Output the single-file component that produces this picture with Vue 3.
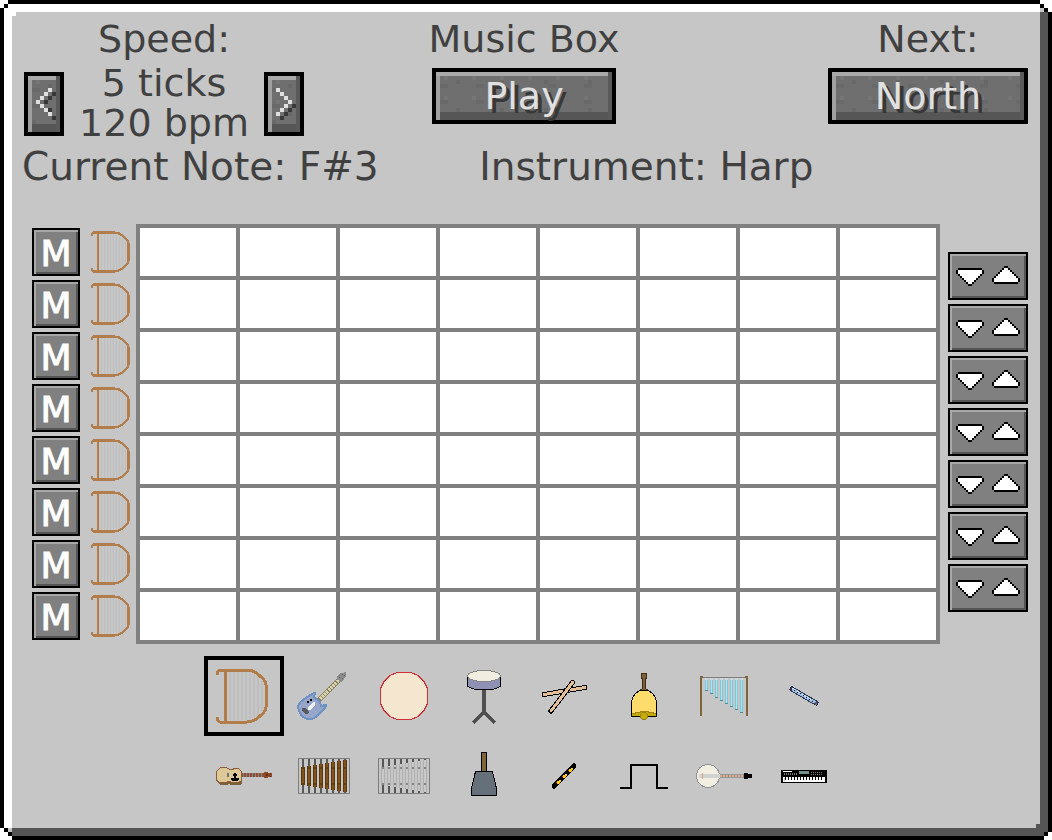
<template>
  <div class="frame">
    <svg
      v-for="corner in corners"
      :key="corner.name"
      class="corner"
      :class="corner.name"
      viewBox="0 0 4 4"
      aria-hidden="true"
    >
      <template v-for="(row, y) in corner.rows" :key="y">
        <rect
          v-for="(cell, x) in row"
          :key="x"
          :x="x"
          :y="y"
          width="1"
          height="1"
          :fill="palette[cell]"
        />
      </template>
    </svg>

    <header class="header">
      <section class="speed">
        <h2>Speed:</h2>
        <div class="speed-row">
          <button class="stone small" type="button" aria-label="Slower" @click="changeTicks(-1)">
            <svg viewBox="0 0 6 8" aria-hidden="true">
              <path
                fill="#383838"
                d="M4 1h1v1h-1zM3 2h1v1h-1zM2 3h1v1h-1zM3 5h1v1h-1zM4 7h1v1h-1z"
              />
              <path
                fill="#e0e0e0"
                d="M3 0h1v1h-1zM2 1h1v1h-1zM1 2h1v1h-1zM0 3h1v1h-1zM1 4h1v1h-1zM2 5h1v1h-1zM3 6h1v1h-1z"
              />
            </svg>
          </button>
          <p>{{ ticks }} ticks<br />{{ bpm }} bpm</p>
          <button class="stone small" type="button" aria-label="Faster" @click="changeTicks(1)">
            <svg viewBox="0 0 6 8" aria-hidden="true">
              <path fill="#383838" d="M4 4h1v1h-1zM3 5h1v1h-1zM2 6h1v1h-1zM1 7h1v1h-1z" />
              <path
                fill="#e0e0e0"
                d="M0 0h1v1h-1zM1 1h1v1h-1zM2 2h1v1h-1zM3 3h1v1h-1zM2 4h1v1h-1zM1 5h1v1h-1zM0 6h1v1h-1z"
              />
            </svg>
          </button>
        </div>
      </section>

      <section class="player">
        <h1>Music Box</h1>
        <button class="stone wide" type="button" @click="playing = !playing">
          {{ playing ? 'Stop' : 'Play' }}
        </button>
      </section>

      <section class="next">
        <h2>Next:</h2>
        <button class="stone wider" type="button" @click="turn">{{ directions[direction] }}</button>
      </section>
    </header>

    <div class="info">
      <p>Current Note: {{ note }}</p>
      <p>Instrument: {{ instruments[selected].label }}</p>
    </div>

    <main class="sequencer">
      <div class="mutes">
        <button
          v-for="(track, i) in tracks"
          :key="i"
          class="panel mute"
          type="button"
          :aria-pressed="track.muted"
          @click="track.muted = !track.muted"
        >
          M
        </button>
      </div>
      <div class="voices">
        <svg v-for="(track, i) in tracks" :key="i" viewBox="0 0 64 64" aria-hidden="true">
          <use :href="'#' + track.instrument" />
        </svg>
      </div>
      <div class="cells">
        <template v-for="(track, i) in tracks" :key="i">
          <button
            v-for="step in 8"
            :key="step"
            class="cell"
            type="button"
            :aria-label="'Track ' + (i + 1) + ', step ' + step"
          ></button>
        </template>
      </div>
      <div class="movers">
        <div v-for="i in 7" :key="i" class="panel mover">
          <button type="button" aria-label="Move track down" @click="swap(i - 1)">
            <svg viewBox="0 0 14 9" aria-hidden="true">
              <path
                d="M1 0h12v1h1v2h-1v1h-1v1h-1v1h-1v1h-1v1h-1v1h-2v-1h-1v-1h-1v-1h-1v-1h-1v-1h-1v-1h-1v-2h1z"
              />
              <path
                fill="#fff"
                d="M1 1h12v2h-1v1h-1v1h-1v1h-1v1h-1v1h-2v-1h-1v-1h-1v-1h-1v-1h-1v-1h-1z"
              />
            </svg>
          </button>
          <button type="button" aria-label="Move track up" @click="swap(i - 1)">
            <svg class="up" viewBox="0 0 14 9" aria-hidden="true">
              <path
                d="M1 9h12v-1h1v-2h-1v-1h-1v-1h-1v-1h-1v-1h-1v-1h-1v-1h-2v1h-1v1h-1v1h-1v1h-1v1h-1v1h-1v2h1z"
              />
              <path
                fill="#fff"
                d="M1 8h12v-2h-1v-1h-1v-1h-1v-1h-1v-1h-1v-1h-2v1h-1v1h-1v1h-1v1h-1v1h-1z"
              />
            </svg>
          </button>
        </div>
      </div>
    </main>

    <nav class="picker" aria-label="Instruments">
      <button
        v-for="(instrument, i) in instruments"
        :key="instrument.id"
        class="slot"
        :class="{ selected: i === selected }"
        type="button"
        :aria-label="instrument.label"
        @click="selected = i"
      >
        <svg viewBox="0 0 64 64" aria-hidden="true">
          <use :href="'#' + instrument.id" />
        </svg>
      </button>
    </nav>

    <svg class="sprites" aria-hidden="true">
      <symbol id="harp" viewBox="0 0 64 64">
        <path
          d="M18 8v48M22 8v48M26 8v48M30 8v48M34 8v48M38 8v48M42 10v44M46 12v40M50 16v32"
          stroke="#bfbfbf"
          stroke-width="2"
        />
        <path d="M12 7h3v50h-3z" fill="#b27d4b" />
        <path
          d="M5 11V8l3-2h27c6 0 10 3 13 6 3 2 6 6 6 9v22c0 3-3 7-6 9-3 3-7 6-13 6H8l-3-2v-3"
          fill="none"
          stroke="#b27d4b"
          stroke-width="3"
        />
      </symbol>

      <symbol id="electric" viewBox="0 0 64 64">
        <path d="M26 37L49 14" stroke="#858066" stroke-width="5" />
        <path d="M26 37L49 14" stroke="#dcd5ab" stroke-width="3" stroke-dasharray="2 1" />
        <path d="M45 14l1-3 3-2 5-1v4l-2 3-3 3h-2v-2h-2z" fill="#8b8b8b" />
        <path d="M47 13h1v1h-1zM50 10h1v1h-1zM50 14h1v1h-1zM52 11h1v1h-1z" fill="#5f5f5f" />
        <path
          d="M6 44q0-5 5-8l4-3 7-4h1l-1 4 6 5 1 4 5-1-1 3-9 9q-3 2-7 2-8 0-11-11z"
          fill="#95a6ca"
          stroke="#6e92c0"
          stroke-width="2"
        />
        <path d="M15 37h2v2h-2zM18 35h2v2h-2z" />
        <path d="M16 43l5-5h2v3l-5 5h-2z" fill="#eef0f4" />
        <path d="M10 44h4l3 4-1 2h-3l-3-3z" fill="#5a5a5a" />
      </symbol>

      <symbol id="drum" viewBox="0 0 64 64">
        <path
          d="M25 8.500h14l7 3 6 6 3.500 7v15l-3.500 7-6 6-7 3h-14l-7-3-6-6-3.500-7v-15l3.500-7 6-6z"
          fill="#f5e7cf"
          stroke="#d02f35"
        />
      </symbol>

      <symbol id="snare" viewBox="0 0 64 64">
        <path d="M30 26h4v23h-4z" fill="#505050" />
        <path d="M32 48L21 59M32 48l11 11" stroke="#505050" stroke-width="3" />
        <path d="M15.500 12v10q4 4 16.500 4t16.500-4V12z" fill="#8f91b4" stroke="#000" />
        <ellipse cx="32" cy="12" rx="16.500" ry="5.500" fill="#f1ede1" stroke="#858585" />
      </symbol>

      <symbol id="sticks" viewBox="0 0 64 64">
        <g stroke-linecap="round">
          <path d="M12 30.500L53 23.500" stroke="#000" stroke-width="5" />
          <path d="M12 30.500L53 23.500" stroke="#e4bf95" stroke-width="3" />
          <path d="M19 47L40.500 18.500" stroke="#000" stroke-width="5" />
          <path d="M19 47L40.500 18.500" stroke="#e4bf95" stroke-width="3" />
        </g>
      </symbol>

      <symbol id="bell" viewBox="0 0 64 64">
        <path d="M29.500 9.500h5v5h-1v10l3 2h-9l3-2v-10h-1z" fill="#7d6035" stroke="#3f2f18" />
        <path
          d="M27.500 26.500h9l4 3 3 4 1 5v13.500h-25V38.500l1-5 3-4z"
          fill="#fddc6b"
          stroke="#000"
        />
        <path d="M20 49h3v-1h5v-1h8v1h5v1h3v3H20z" fill="#c5aa08" />
        <path d="M20 49h3v-1h5v-1h8v1h5v1h3" fill="none" stroke="#a08416" />
        <circle cx="32" cy="52" r="3.500" fill="#c5aa08" stroke="#9a7f12" />
      </symbol>

      <symbol id="chimes" viewBox="0 0 64 64">
        <path d="M9 13h46v1H9z" fill="#7d7d7d" />
        <path d="M8 12h3v2h-1v38H8zM53 12h3v40h-2V14h-1z" fill="#80653a" />
        <g v-for="(h, i) in chimeLengths" :key="i">
          <rect :x="13 + i * 5" y="14" width="3" height="2" fill="#d4d8d9" />
          <rect :x="13 + i * 5" y="16" width="3" :height="h" fill="#7bc8db" />
          <rect :x="14 + i * 5" y="14" width="1" :height="h + 1" fill="#b5e1ea" />
          <rect :x="13 + i * 5" :y="15 + h" width="3" height="1" fill="#4d8d9b" />
        </g>
      </symbol>

      <symbol id="flute" viewBox="0 0 64 64">
        <path d="M20 25L44 39" stroke="#303551" stroke-width="5" stroke-linecap="round" />
        <path d="M20 25L43 38.500" stroke="#9dbfe6" stroke-width="3" />
        <path d="M20 24L40 36" stroke="#d5e8fa" stroke-dasharray="4 2" />
        <path
          d="M22 26h1v1h-1zM25 28h1v1h-1zM28 29h1v1h-1zM31 31h1v1h-1zM34 33h1v1h-1zM37 35h1v1h-1zM40 37h1v1h-1z"
          fill="#17182a"
        />
        <path d="M43 38h2v3h-2z" fill="#5b6079" />
      </symbol>

      <symbol id="guitar" viewBox="0 0 64 64">
        <path d="M4 30h2v7h10v1h3v-1h11v2l-2 2H19l-2-1-2 1H8l-3-3-1-3z" fill="#7b6238" />
        <path
          d="M8.500 23.500h6l3 2h3l2-1h4l3 3v9l-3 2h-6l-3-1-4 1h-6l-3-3v-8z"
          fill="#ddc898"
          stroke="#8d5a38"
        />
        <path d="M15 29h2v4h-2z" fill="#747474" />
        <path d="M22 29h2v1h1v2h-1v2h3v2h-1v1h-6v-1h-1v-2h3v-2h-1v-2h1z" />
        <path d="M30 29h22v4H30z" fill="#8d4f33" />
        <path d="M31 31h21" stroke="#888" stroke-width="4" stroke-dasharray="1 2" />
        <path d="M52 28h4v1h4v4h-4v1h-4z" fill="#8d4a29" />
        <path d="M54 30h2v2h-2zM58 29h1v1h-1zM58 32h1v1h-1z" fill="#5c2e1a" />
      </symbol>

      <symbol id="xylophone" viewBox="0 0 64 64">
        <rect x="6.500" y="14.500" width="51" height="35" fill="none" stroke="#7d7d7d" />
        <g v-for="i in 8" :key="i">
          <rect :x="4 + i * 6" y="15" width="2" height="34" fill="#585858" />
          <rect :x="3 + i * 6" :y="24 - i" width="4" :height="16 + i * 2" fill="#5b380b" />
          <rect :x="4 + i * 6" :y="24 - i" width="2" :height="16 + i * 2" fill="#80511b" />
          <rect :x="4 + i * 6" y="23" width="2" height="2" fill="#65400f" />
          <rect :x="4 + i * 6" y="39" width="2" height="2" fill="#65400f" />
        </g>
      </symbol>

      <symbol id="vibraphone" viewBox="0 0 64 64">
        <rect x="6.500" y="14.500" width="51" height="35" fill="none" stroke="#7d7d7d" />
        <g v-for="i in 8" :key="i">
          <rect :x="4 + i * 6" y="15" width="2" height="34" fill="#555" />
          <rect :x="3 + i * 6" :y="24 - i" width="4" :height="16 + i * 2" fill="#b0b0b0" />
          <rect :x="4 + i * 6" :y="24 - i" width="2" :height="16 + i * 2" fill="#c8c8c8" />
          <rect :x="4 + i * 6" y="23" width="2" height="2" fill="#858585" />
          <rect :x="4 + i * 6" y="39" width="2" height="2" fill="#858585" />
        </g>
      </symbol>

      <symbol id="cowbell" viewBox="0 0 64 64">
        <path d="M29.500 27V9l1-.500h3l1 .500v18z" fill="#7f6438" stroke="#000" />
        <path d="M23.500 27.500h17l4 17v7h-25v-7z" fill="#66707b" stroke="#000" />
      </symbol>

      <symbol id="didgeridoo" viewBox="0 0 64 64">
        <path d="M22 42L42 22" stroke="#000" stroke-width="5" stroke-linecap="round" />
        <path
          d="M24 38h1v1h-1zM27 39h1v1h-1zM30 32h1v1h-1zM33 33h1v1h-1zM36 26h1v1h-1zM39 27h1v1h-1z"
          fill="#e33a2c"
        />
        <path
          d="M24 39h1v-2h2v-1h2v2h-1v1h-1v1h-2zM30 33h1v-2h2v-1h2v2h-1v1h-1v1h-2zM36 27h1v-2h2v-1h2v2h-1v1h-1v1h-2z"
          fill="#ffcf10"
        />
      </symbol>

      <symbol id="bit" viewBox="0 0 64 64">
        <path d="M8 44h11V21h26v23h11" fill="none" stroke="#000" stroke-width="2" />
      </symbol>

      <symbol id="banjo" viewBox="0 0 64 64">
        <circle cx="16" cy="32" r="11.500" fill="#f1efe1" stroke="#919191" />
        <path d="M7 30h21v4H7z" fill="#d2d2d2" />
        <path d="M10 29h1v6h-1z" fill="#d8a07c" />
        <path d="M28 30h24v4H28z" fill="#969696" />
        <path d="M28 32h24" stroke="#dda98a" stroke-width="2" stroke-dasharray="2 1" />
        <path d="M52 29h4v1h4v4h-4v1h-4z" />
      </symbol>

      <symbol id="keyboard" viewBox="0 0 64 64">
        <path d="M9 26h46v13H9z" />
        <path d="M11 27h9v1h-9zM11 33h42v5H11z" fill="#fff" />
        <path d="M27 27h10v3H27z" fill="#71908c" />
        <path d="M12 30h14" stroke="#777" stroke-width="2" stroke-dasharray="1 1" />
        <path d="M39 28.500h12M39 30.500h12" stroke="#777" stroke-dasharray="1 1" />
        <path d="M13 34.500h39" stroke="#000" stroke-width="3" stroke-dasharray="1 2" />
        <path d="M12 34h1v3h-1z" fill="#bcc9d4" />
      </symbol>
    </svg>
  </div>
</template>

<script setup>
import { computed, ref } from 'vue'

const palette = { W: '#ffffff', K: '#000000', G: '#c6c6c6', D: '#555555' }

const corners = [
  { name: 'top-left', rows: ['WWKK', 'WKWW', 'KWWW', 'KWWW'] },
  { name: 'top-right', rows: ['KWWW', 'WKWW', 'WGKW', 'GDDK'] },
  { name: 'bottom-left', rows: ['KWWG', 'WKGD', 'WWKD', 'WWWK'] },
  { name: 'bottom-right', rows: ['DDDK', 'DDDK', 'DDKW', 'KKWW'] }
].map((corner) => ({ ...corner, rows: corner.rows.map((row) => row.split('')) }))

const instruments = [
  { id: 'harp', label: 'Harp' },
  { id: 'electric', label: 'Bass' },
  { id: 'drum', label: 'Bass Drum' },
  { id: 'snare', label: 'Snare' },
  { id: 'sticks', label: 'Sticks' },
  { id: 'bell', label: 'Bell' },
  { id: 'chimes', label: 'Chimes' },
  { id: 'flute', label: 'Flute' },
  { id: 'guitar', label: 'Guitar' },
  { id: 'xylophone', label: 'Xylophone' },
  { id: 'vibraphone', label: 'Iron Xylophone' },
  { id: 'cowbell', label: 'Cow Bell' },
  { id: 'didgeridoo', label: 'Didgeridoo' },
  { id: 'bit', label: 'Bit' },
  { id: 'banjo', label: 'Banjo' },
  { id: 'keyboard', label: 'Pling' }
]

const chimeLengths = [11, 14, 18, 21, 24, 27, 30, 33]
const directions = ['North', 'East', 'South', 'West']

const ticks = ref(5)
const bpm = computed(() => Math.round(600 / ticks.value))
const playing = ref(false)
const direction = ref(0)
const note = ref('F#3')
const selected = ref(0)
const tracks = ref(Array.from({ length: 8 }, () => ({ instrument: 'harp', muted: false })))

function changeTicks(delta) {
  ticks.value = Math.min(20, Math.max(1, ticks.value + delta))
}

function turn() {
  direction.value = (direction.value + 1) % directions.length
}

function swap(i) {
  const list = tracks.value
  ;[list[i], list[i + 1]] = [list[i + 1], list[i]]
}
</script>

<style>
body {
  background: #fff;
}
</style>

<style scoped>
.frame {
  position: relative;
  box-sizing: border-box;
  min-height: 100vh;
  border: 4px solid #000;
  padding: 15px 20px 20px 16px;
  background: #c6c6c6;
  box-shadow:
    inset 8px 8px 0 #fff,
    inset -8px -8px 0 #555;
  color: #404040;
  font-family: 'DejaVu Sans', sans-serif;
  font-size: 38px;
  line-height: 40px;
}

/* single stepped pixels on the inner bevel */
.frame::before,
.frame::after {
  content: '';
  position: absolute;
  width: 4px;
  height: 4px;
}

.frame::before {
  top: 8px;
  left: 8px;
  background: #fff;
}

.frame::after {
  right: 8px;
  bottom: 8px;
  background: #555;
}

.corner {
  position: absolute;
  width: 16px;
  height: 16px;
}

.top-left {
  top: -4px;
  left: -4px;
}

.top-right {
  top: -4px;
  right: -4px;
}

.bottom-left {
  bottom: -4px;
  left: -4px;
}

.bottom-right {
  right: -4px;
  bottom: -4px;
}

svg {
  display: block;
  shape-rendering: crispEdges;
}

.sprites {
  position: absolute;
  width: 0;
  height: 0;
}

h1,
h2,
p {
  margin: 0;
  font-size: inherit;
  font-weight: normal;
}

h1,
h2 {
  margin-bottom: 4px;
  text-align: center;
}

button {
  box-sizing: border-box;
  margin: 0;
  padding: 0;
  border: 0;
  border-radius: 0;
  background: none;
  color: inherit;
  font: inherit;
  cursor: pointer;
}

.header {
  display: grid;
  grid-template-columns: 1fr auto 1fr;
}

.speed {
  width: 280px;
  margin-left: 4px;
}

.speed-row {
  display: flex;
  align-items: center;
  justify-content: space-between;
  text-align: center;
}

.next {
  justify-self: end;
}

.stone {
  border: 4px solid #000;
  background:
    conic-gradient(from 0deg at 4px 4px, transparent 75%, rgba(255, 255, 255, 0.05) 0) 8px 4px / 28px
      20px,
    conic-gradient(from 0deg at 8px 4px, transparent 75%, rgba(0, 0, 0, 0.05) 0) 4px 12px / 36px
      16px,
    conic-gradient(from 0deg at 4px 4px, transparent 75%, rgba(0, 0, 0, 0.06) 0) 20px 8px / 44px
      28px,
    #6f6f6f;
  box-shadow:
    inset -4px 0 0 #5a5a5a,
    inset 0 4px 0 #a9a9a9,
    inset 4px 0 0 #a0a0a0,
    inset 0 -8px 0 #565656;
  color: #e0e0e0;
  text-shadow: 4px 4px 0 #383838;
}

.small {
  width: 40px;
  height: 64px;
  margin-top: 2px;
}

.small svg {
  width: 24px;
  height: 32px;
  margin-left: 8px;
}

.wide,
.wider {
  display: block;
  width: 184px;
  height: 56px;
  margin: 9px auto 0;
}

.wider {
  width: 200px;
}

.info {
  display: grid;
  grid-template-columns: 5fr 6fr;
  margin-top: 4px;
  padding-left: 2px;
  font-size: 39px;
}

.sequencer {
  display: flex;
  margin-top: 37px;
  padding-left: 12px;
}

.mutes,
.voices,
.movers {
  display: flex;
  flex-direction: column;
  gap: 4px;
  padding-top: 4px;
}

.mutes {
  margin-right: 8px;
}

.panel {
  border: 2px solid #000;
  background: #808080;
  box-shadow:
    inset 2px 2px 0 #a8a8a8,
    inset -2px -2px 0 #555;
}

.mute {
  width: 48px;
  height: 48px;
  padding-top: 3px;
  color: #fff;
  font-size: 36px;
  -webkit-text-stroke: 1px currentColor;
}

.mute[aria-pressed='true'] {
  color: #555;
}

.voices svg {
  width: 48px;
  height: 48px;
}

.cells {
  display: grid;
  flex: 1;
  grid-template-columns: repeat(8, 1fr);
  grid-auto-rows: 48px;
  gap: 4px;
  padding: 4px;
  background: #808080;
}

.cell {
  background: #fff;
}

.movers {
  margin-left: 8px;
  padding-top: 28px;
}

.mover {
  display: flex;
  box-sizing: border-box;
  width: 80px;
  height: 48px;
  padding: 0 2px;
}

.mover button {
  flex: 1;
}

.mover svg {
  width: 28px;
  height: 18px;
  margin: 2px auto 0;
}

.mover .up {
  margin: 0 auto 2px;
}

.picker {
  display: grid;
  grid-template-columns: repeat(8, 80px);
  justify-content: center;
  margin-top: 12px;
}

.slot {
  display: flex;
  align-items: center;
  justify-content: center;
  height: 80px;
  border: 4px solid transparent;
}

.slot.selected {
  border-color: #000;
}

.slot svg {
  flex: none;
  width: 64px;
  height: 64px;
}
</style>
